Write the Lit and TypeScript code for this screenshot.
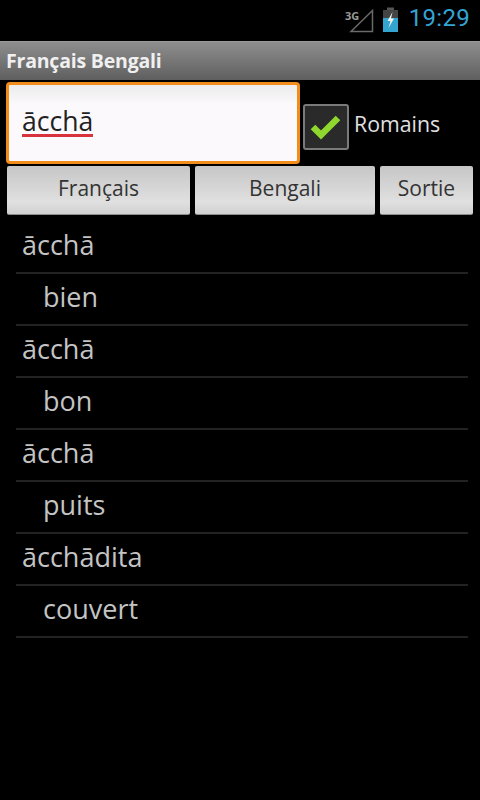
import { LitElement, html, css, svg } from "lit";
import { customElement } from "lit/decorators.js";

const rows: [string, boolean][] = [
  ["ācchā", false], ["bien", true], ["ācchā", false], ["bon", true],
  ["ācchā", false], ["puits", true], ["ācchādita", false], ["couvert", true],
];

@customElement("app-root")
export class AppRoot extends LitElement {
  static styles = css`
    :host { display: block; width: 480px; height: 800px; background: #000; overflow: hidden; font-family: "Open Sans", "Noto Sans", sans-serif; }
    .status { height: 41px; display: flex; align-items: center; justify-content: flex-end; padding-right: 10px; box-sizing: border-box; background: #000; }
    .sig { display: block; margin-right: 7px; margin-top: -2px; }
    .bat { display: block; margin-right: 10px; margin-top: -2px; }
    .clock { color: #33a5d5; font-size: 24px; font-family: "Roboto", sans-serif; line-height: 41px; margin-top: -4px; letter-spacing: 0.3px; }
    .title { height: 39px; box-sizing: border-box; border-top: 1px solid #9a9a9a; background: linear-gradient(#8e8e8e, #5f5f5f); color: #f0f0f0; font-weight: 700; font-size: 19.5px; letter-spacing: -0.2px; line-height: 38px; padding-left: 6px; }
    .top { display: flex; height: 82px; margin-top: 2px; padding-left: 6px; gap: 3px; }
    .input { width: 294px; height: 82px; box-sizing: border-box; border: 3px solid #f28c1b; border-radius: 4px; background: linear-gradient(#ececec, #fbf9fb 25%); display: flex; align-items: center; padding: 0 0 3px 13px; color: #222; font-size: 26.6px; }
    .word { border-bottom: 3px solid #d8323c; line-height: 29px; height: 27px; }
    .check { display: flex; align-items: center; height: 82px; color: #e0e0e0; font-size: 21.3px; }
    .box { width: 46px; height: 46px; box-sizing: border-box; border: 2px solid #7a7a7a; border-radius: 3px; background: #2a2a2a; display: flex; align-items: center; justify-content: center; margin-right: 5px; margin-top: 7px; }
    .label { margin-top: 1px; }
    .buttons { display: flex; padding-left: 7px; gap: 5px; margin-top: 2px; }
    .btn { height: 49px; box-sizing: border-box; border-radius: 2px; background: linear-gradient(#c6c6c6, #e0e0e0 75%, #d0d0d0); color: #333; font-size: 21px; display: flex; align-items: center; justify-content: center; padding-bottom: 5px; border-bottom: 1px solid #8c8c8c; }
    .b1 { width: 183px; }
    .b2 { width: 180px; }
    .b3 { width: 93px; }
    .list { margin: 7px 12px 0 16px; }
    .row { height: 52px; box-sizing: border-box; border-bottom: 2px solid #222; color: #c4c4c4; font-size: 27px; line-height: 45px; padding-left: 6px; }
    .row.sub { padding-left: 27px; }
  `;

  render() {
    return html`
      <div class="status">
        <svg class="sig" width="31" height="26" viewBox="0 0 31 26">
          ${svg`<text x="1" y="13" font-size="11" font-weight="700" fill="#9a9a9a" font-family="Open Sans">3G</text>
          <path d="M7 24.5 L28.5 3.5 V24.5 Z" fill="none" stroke="#6a6a6a" stroke-width="1.5"/>`}
        </svg>
        <svg class="bat" width="17" height="25" viewBox="0 0 17 25">
          ${svg`<rect x="5" y="0.5" width="7" height="3" fill="#555"/>
          <rect x="1" y="3" width="15" height="22" fill="#444"/>
          <rect x="1" y="11" width="15" height="14" fill="#33a5cf"/>
          <path d="M10.5 5 L5.5 14 H8.5 L6.5 21 L12 11.5 H9 Z" fill="#f2f2f2"/>`}
        </svg>
        <span class="clock">19:29</span>
      </div>
      <div class="title">Français Bengali</div>
      <div class="top">
        <div class="input"><span class="word">ācchā</span></div>
        <div class="check">
          <div class="box">
            <svg width="34" height="28" viewBox="0 0 34 28">
              ${svg`<path d="M4 14 L12 22 L29 5" fill="none" stroke="#8fd62f" stroke-width="6.5"/>`}
            </svg>
          </div>
          <span class="label">Romains</span>
        </div>
      </div>
      <div class="buttons">
        <div class="btn b1">Français</div>
        <div class="btn b2">Bengali</div>
        <div class="btn b3">Sortie</div>
      </div>
      <div class="list">
        ${rows.map(([t, sub]) => html`<div class="row ${sub ? "sub" : ""}">${t}</div>`)}
      </div>
    `;
  }
}
